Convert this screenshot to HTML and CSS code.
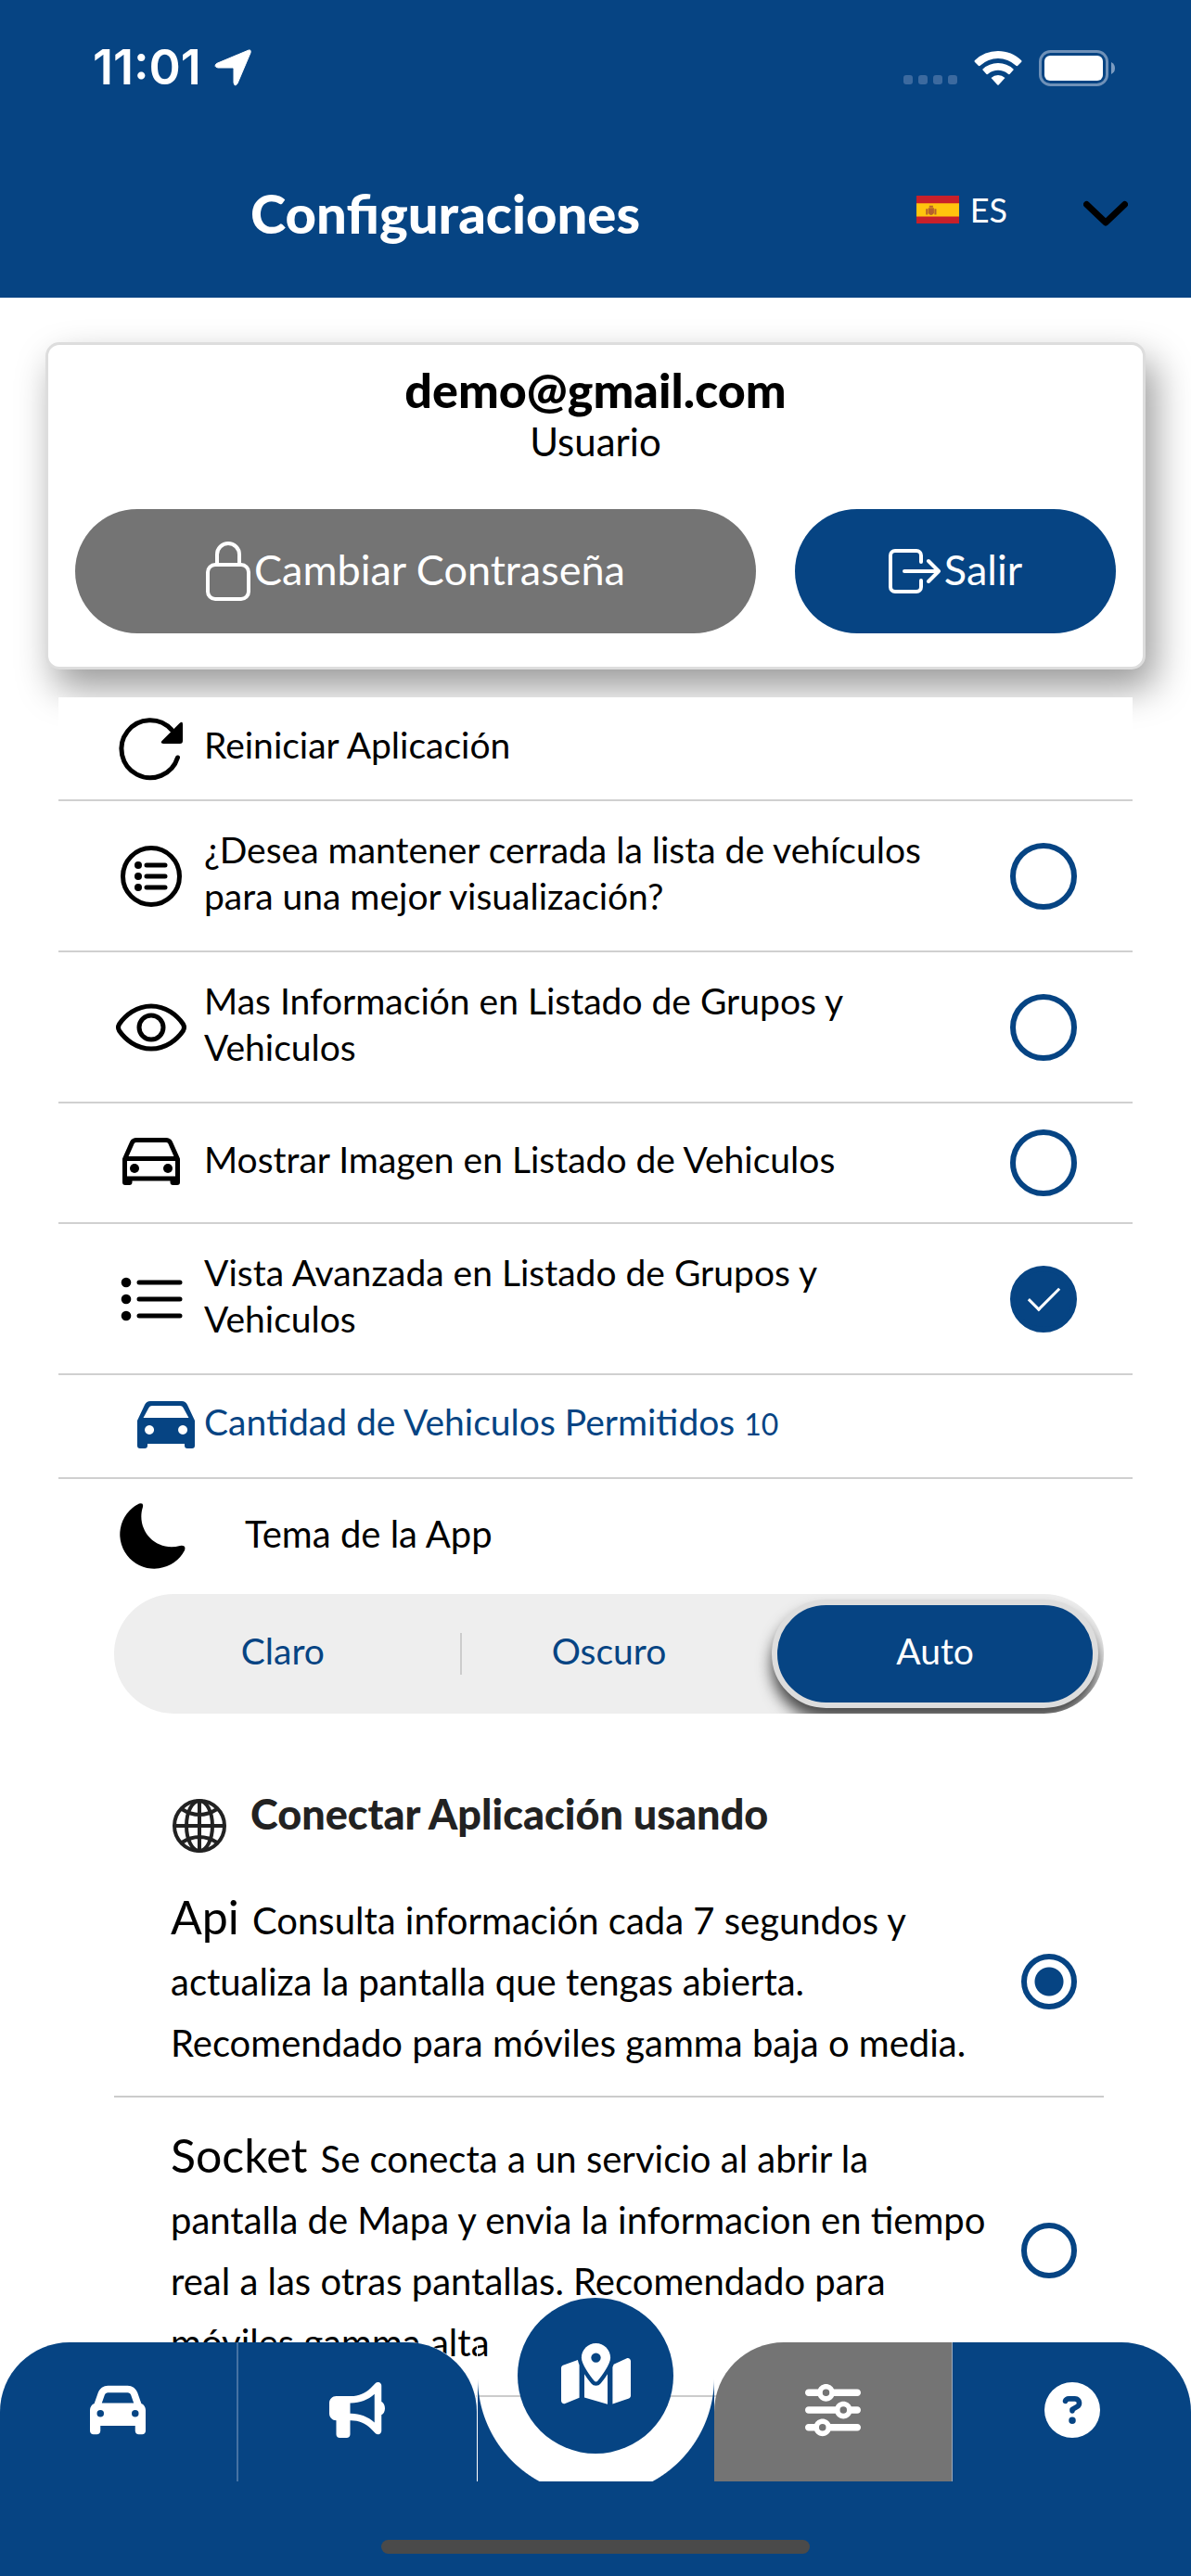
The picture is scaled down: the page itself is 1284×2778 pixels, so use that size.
FILE: index.html
```html
<!DOCTYPE html>
<html lang="es">
<head>
<meta charset="UTF-8" />
<meta name="viewport" content="width=device-width, initial-scale=1" />
<title>Configuraciones</title>
<link rel="stylesheet" href="styles.css">
</head>
<body>
  <header class="header">
    <div class="status-bar">
      <div class="status-left">
        <span class="time">11:01</span>
        <svg class="icon-location" viewBox="0 0 40 40"><path d="M36 1.500Q40 -.5 39 4L25 37Q22 41.500 21 36V21.500Q21 20 19.500 20H4Q-1 19 2.500 15.500Z" fill="#fff" stroke="#fff" stroke-width="1"/></svg>
      </div>
      <div class="status-right">
        <span class="signal"><i></i><i></i><i></i><i></i></span>
        <svg class="icon-wifi" viewBox="0 0 52 38" fill="#fff"><path d="M26 1C35.500 1 44.500 4.500 51 11Q52 12 51 13L47 17Q46 17.500 45 16.500A28 28 0 0 0 7 16.500Q6 17.500 5 17L1 13Q0 12 1 11A36 36 0 0 1 26 1Z"/><path d="M26 14A24 24 0 0 1 42.500 20.500Q43 21 42.500 21.500L38.500 26Q37.500 26.500 36.500 25.500A17 17 0 0 0 15.500 25.500Q14.500 26.500 13.500 26L9.500 21.500Q9 21 9.500 20.500A24 24 0 0 1 26 14Z"/><path d="M26 27A12 12 0 0 1 33.500 30L26.700 37.500Q26 38 25.300 37.500L18.500 30A12 12 0 0 1 26 27Z"/></svg>
        <svg class="icon-battery" viewBox="0 0 83 39"><rect x="1.500" y="1.500" width="72" height="36" rx="11" fill="none" stroke="#6f91b8" stroke-width="3"/><rect x="6" y="6" width="63" height="27" rx="6" fill="#fff"/><path d="M78 13Q82 15 82 19.500Q82 24 78 26Z" fill="#7c9cc1"/></svg>
      </div>
    </div>
    <div class="title-bar">
      <h1>Configuraciones</h1>
      <button class="lang-btn" type="button" aria-label="Idioma">
        <span class="lang">
          <svg class="flag" viewBox="0 0 45 30"><path fill="#c8202a" d="M0 0h45v30H0z"/><path fill="#ffc40d" d="M0 8h45v14H0z"/><path fill="#b5602c" d="M10 14h2v6h-2zM19 14h2v6h-2zM13.500 10.500h4v2h-4zM12.500 13h6v5.500q-3 4-6 0z"/></svg>
          ES
        </span>
        <svg class="chevron" viewBox="0 0 48 29"><path d="M3.500 4.500L24 24L44.500 4.500" fill="none" stroke="#000" stroke-width="7" stroke-linecap="round" stroke-linejoin="round"/></svg>
      </button>
    </div>
  </header>

  <main>
    <section class="card">
      <h2 class="email">demo@gmail.com</h2>
      <p class="role">Usuario</p>
      <div class="card-buttons">
        <button class="btn btn-gray" type="button">
          <svg class="icon-lock" viewBox="0 0 48 64" fill="none" stroke="#fff" stroke-width="4" stroke-linejoin="round"><rect x="2" y="25" width="44" height="37" rx="8"/><path d="M12 25V14a12 12 0 0 1 24 0v11"/></svg>
          <span>Cambiar Contraseña</span>
        </button>
        <button class="btn btn-blue" type="button">
          <svg class="icon-exit" viewBox="0 0 56 48" fill="none" stroke="#fff" stroke-width="4" stroke-linecap="round" stroke-linejoin="round"><path d="M35 14V7a5 5 0 0 0-5-5H7a5 5 0 0 0-5 5v34a5 5 0 0 0 5 5h23a5 5 0 0 0 5-5v-7M17 24h37M43 13l11 11l-11 11"/></svg>
          <span>Salir</span>
        </button>
      </div>
    </section>

    <ul class="list">
      <li class="row short">
        <svg class="icon" viewBox="0 0 80 80"><path d="M68.500 50A31 31 0 1 1 62 20" fill="none" stroke="#000" stroke-width="5" stroke-linecap="round"/><path d="M70.500 13Q74 10 74 14V32Q74 35 71 35H53Q49 34.500 52 31.500Z"/></svg>
        <a href="#" class="row-text">Reiniciar Aplicación</a>
      </li>
      <li class="row">
        <svg class="icon" viewBox="0 0 80 80"><circle cx="40" cy="40" r="30.500" fill="none" stroke="#000" stroke-width="5"/><path d="M35 28h20M35 40h20M35 52h20" stroke="#000" stroke-width="5" stroke-linecap="round"/><circle cx="26" cy="28" r="4"/><circle cx="26" cy="40" r="4"/><circle cx="26" cy="52" r="4"/></svg>
        <label class="row-text" for="closed">¿Desea mantener cerrada la lista de vehículos para una mejor visualización?</label>
        <input class="check" type="checkbox" id="closed">
      </li>
      <li class="row">
        <svg class="icon" viewBox="0 0 80 80" fill="none" stroke="#000" stroke-width="5"><path d="M40 17C24 17 12 27 5.500 36.500Q3.500 40 5.500 43.500C12 53 24 63 40 63S68 53 74.500 43.500Q76.500 40 74.500 36.500C68 27 56 17 40 17Z"/><circle cx="40" cy="40" r="13"/></svg>
        <label class="row-text" for="info">Mas Información en Listado de Grupos y Vehiculos</label>
        <input class="check" type="checkbox" id="info">
      </li>
      <li class="row medium">
        <svg class="icon" viewBox="0 0 80 80"><path d="M11.500 36L19.500 18Q21 15.500 24 15.500H56Q59 15.500 60.500 18L68.500 36V57H11.500ZM11.500 35.500H68.500" fill="none" stroke="#000" stroke-width="5" stroke-linejoin="round"/><path d="M9 57h10.500v4q0 3-3 3h-4.500q-3 0-3-3zM60.500 57h10.500v4q0 3-3 3h-4.500q-3 0-3-3z"/><circle cx="22" cy="46" r="5"/><circle cx="58" cy="46" r="5"/></svg>
        <label class="row-text" for="image">Mostrar Imagen en Listado de Vehiculos</label>
        <input class="check" type="checkbox" id="image">
      </li>
      <li class="row">
        <svg class="icon" viewBox="0 0 80 80"><path d="M27 22h44M27 40h44M27 58h44" stroke="#000" stroke-width="5" stroke-linecap="round"/><circle cx="13" cy="22" r="5.300"/><circle cx="13" cy="40" r="5.300"/><circle cx="13" cy="58" r="5.300"/></svg>
        <label class="row-text" for="advanced">Vista Avanzada en Listado de Grupos y Vehiculos</label>
        <input class="check" type="checkbox" id="advanced" checked>
      </li>
      <li class="row short allowed">
        <svg class="icon" viewBox="0 0 80 80"><path fill="#064483" fill-rule="evenodd" d="M9 34L17 17Q19 13 23 13H57Q61 13 63 17L71 34V61Q71 64 68 64H63Q60 64 60 61V59H20V61Q20 64 17 64H12Q9 64 9 61ZM15.500 31H64.500L58.500 20Q57.500 18 55 18H25Q22.500 18 21.500 20ZM22 39a5 5 0 1 0 .1 0ZM58 39a5 5 0 1 0 .1 0Z"/></svg>
        <span class="row-text">Cantidad de Vehiculos Permitidos <small>10</small></span>
      </li>
    </ul>

    <section class="theme">
      <div class="theme-title">
        <svg class="icon" viewBox="0 0 80 80"><path d="M27 4.500Q32 3 31 8C23 33 45 57 71 50Q78 49 76 55A37 37 0 1 1 27 4.500Z"/></svg>
        <span>Tema de la App</span>
      </div>
      <div class="segment">
        <button type="button">Claro</button>
        <button type="button">Oscuro</button>
        <button type="button" class="active">Auto</button>
      </div>
    </section>

    <section class="connect">
      <h2 class="connect-title">
        <svg class="icon-globe" viewBox="0 0 60 60" fill="none" stroke="#222" stroke-width="4"><circle cx="30" cy="30" r="27"/><ellipse cx="30" cy="30" rx="14" ry="27"/><path d="M30 3V57M3 30H57M11 12Q30 24 49 12M11 48Q30 36 49 48"/></svg>
        <span>Conectar Aplicación usando</span>
      </h2>
      <div class="option">
        <label for="api"><b>Api</b> Consulta información cada 7 segundos y actualiza la pantalla que tengas abierta. Recomendado para móviles gamma baja o media.</label>
        <input class="radio" type="radio" name="mode" id="api" checked>
      </div>
      <div class="option">
        <label for="socket"><b>Socket</b> Se conecta a un servicio al abrir la pantalla de Mapa y envia la informacion en tiempo real a las otras pantallas. Recomendado para móviles gamma alta</label>
        <input class="radio" type="radio" name="mode" id="socket">
      </div>
    </section>
  </main>

  <nav class="tabs">
    <div class="tab-row">
      <a href="#" class="tab tab-first" aria-label="Vehiculos"><svg viewBox="0 0 512 512"><path d="M135.200 117.400L109.100 192H402.900l-26.100-74.600C372.300 104.600 360.200 96 346.600 96H165.400c-13.600 0-25.700 8.600-30.200 21.400zM39.600 196.800L74.800 96.300C88.300 57.800 124.600 32 165.400 32H346.600c40.800 0 77.100 25.800 90.600 64.300l35.200 100.500c23.200 9.600 39.600 32.500 39.600 59.200V448c0 17.700-14.300 32-32 32H448c-17.700 0-32-14.300-32-32V400H96v48c0 17.700-14.300 32-32 32H32c-17.700 0-32-14.300-32-32V256c0-26.700 16.400-49.600 39.600-59.200zM128 288a32 32 0 1 0-64 0 32 32 0 1 0 64 0zm288 32a32 32 0 1 0 0-64 32 32 0 1 0 0 64z"/></svg></a>
      <a href="#" class="tab tab-alerts" aria-label="Alertas"><svg viewBox="0 0 512 512"><path d="M480 32c0-12.900-7.800-24.600-19.800-29.600s-25.700-2.200-34.900 6.900L381.700 53c-48 48-113.100 75-181 75H64c-35.300 0-64 28.700-64 64v96c0 35.300 28.700 64 64 64v128c0 17.700 14.300 32 32 32h64c17.700 0 32-14.300 32-32V352h8.700c67.900 0 133 27 181 75l43.600 43.600c9.200 9.200 22.900 11.900 34.900 6.900s19.800-16.600 19.800-29.600V300.400c18.600-8.800 32-32.500 32-60.400s-13.400-51.600-32-60.400V32zm-64 76.700V371.300C357.200 317.800 280.500 288 200.700 288H192V192h8.700c79.800 0 156.500-29.800 215.300-83.300z"/></svg></a>
      <div class="tab-center">
        <a href="#" class="map-btn" aria-label="Mapa"><svg viewBox="0 0 576 512"><path d="M408 120c0 54.600-73.100 151.900-105.200 192c-7.700 9.600-22 9.600-29.600 0C241.100 271.900 168 174.600 168 120C168 53.700 221.700 0 288 0s120 53.700 120 120zM288 160a40 40 0 1 0 0-80 40 40 0 1 0 0 80zM137.600 138.300c2.400 14.100 7.200 28.300 12.800 41.500V451.800L32.900 498.800C17.100 505.100 0 493.500 0 476.600V205.200c0-9.800 6-18.600 15.100-22.300zM327.800 332c13.900-17.400 35.700-45.700 56.200-77V504.300L192 449.400V255c20.500 31.300 42.300 59.600 56.200 77c20.500 25.600 59.100 25.600 79.600 0zM425.600 503.200V198.600c3.500-8.100 6.800-16.300 9.700-24.500L543.100 125.200C558.900 118.900 576 130.500 576 147.400V434.800c0 9.800-6 18.600-15.100 22.300z"/></svg></a>
      </div>
      <a href="#" class="tab tab-active" aria-label="Configuraciones"><svg viewBox="0 0 512 512"><path d="M0 416c0 17.700 14.300 32 32 32h54.700c12.300 28.300 40.500 48 73.300 48s61-19.700 73.300-48H480c17.700 0 32-14.300 32-32s-14.300-32-32-32H233.300c-12.300-28.300-40.500-48-73.300-48s-61 19.700-73.300 48H32c-17.700 0-32 14.300-32 32zm128 0a32 32 0 1 1 64 0 32 32 0 1 1-64 0zM320 256a32 32 0 1 1 64 0 32 32 0 1 1-64 0zm32-80c-32.800 0-61 19.700-73.300 48H32c-17.700 0-32 14.300-32 32s14.300 32 32 32h246.700c12.300 28.300 40.500 48 73.300 48s61-19.700 73.300-48H480c17.700 0 32-14.300 32-32s-14.300-32-32-32h-54.700c-12.300-28.300-40.500-48-73.300-48zM192 128a32 32 0 1 1 0-64 32 32 0 1 1 0 64zm73.300-64C253 35.700 224.800 16 192 16s-61 19.700-73.300 48H32C14.300 64 0 78.300 0 96s14.300 32 32 32h86.700c12.300 28.300 40.500 48 73.300 48s61-19.700 73.300-48H480c17.700 0 32-14.300 32-32s-14.300-32-32-32H265.300z"/></svg></a>
      <a href="#" class="tab tab-last" aria-label="Ayuda"><svg viewBox="0 0 512 512"><path d="M256 512A256 256 0 1 0 256 0a256 256 0 1 0 0 512zM169.800 165.300c7.900-22.300 29.100-37.300 52.800-37.300h58.300c34.900 0 63.100 28.300 63.100 63.100c0 22.600-12.100 43.500-31.700 54.800L280 264.400c-.2 13-10.900 23.600-24 23.600c-13.300 0-24-10.700-24-24V250.500c0-8.600 4.600-16.500 12.100-20.800l44.300-25.400c4.700-2.700 7.600-7.700 7.600-13.100c0-8.400-6.800-15.100-15.100-15.100H222.600c-3.400 0-6.400 2.100-7.500 5.300l-.4 1.200c-4.400 12.500-18.200 19-30.600 14.600s-19-18.200-14.600-30.600l.3-1.300zM224 352a32 32 0 1 1 64 0 32 32 0 1 1-64 0z"/></svg></a>
    </div>
    <div class="home-area"><div class="home-bar"></div></div>
  </nav>
</body>
</html>
```

FILE: styles.css
```css
* {
  box-sizing: border-box;
}
body {
  margin: 0;
  height: 100vh;
  overflow: hidden;
  background: #fff;
  color: #000;
  font-family: Lato, "Open Sans", sans-serif;
  font-size: 40px;
  line-height: 50px;
}
h1, h2, p, ul {
  margin: 0;
  padding: 0;
}
svg {
  display: block;
  flex: none;
}
button {
  border: none;
  background: none;
  padding: 0;
  font: inherit;
  cursor: pointer;
}
a {
  color: inherit;
  text-decoration: none;
}

/* header */
.header {
  background: #064483;
  color: #fff;
  height: 321px;
}
.status-bar {
  display: flex;
  justify-content: space-between;
  padding: 48px 81px 0 100px;
}
.status-left, .status-right {
  display: flex;
  align-items: center;
  height: 50px;
}
.status-left {
  gap: 14px;
}
.time {
  font-family: Inter, sans-serif;
  font-size: 52px;
  font-weight: 600;
}
.icon-location {
  width: 40px;
}
.signal {
  display: flex;
  gap: 6px;
  margin: 26px 18px 0 0;
}
.signal i {
  width: 10px;
  height: 10px;
  border-radius: 3px;
  background: #3c6a9f;
}
.icon-wifi {
  width: 52px;
  margin-right: 18px;
}
.icon-battery {
  width: 83px;
}
.title-bar {
  display: flex;
  align-items: center;
  justify-content: space-between;
  height: 264px;
  padding: 0 68px 0 270px;
}
h1 {
  font-size: 58px;
  font-weight: 900;
}
.lang-btn, .lang {
  display: flex;
  align-items: center;
  color: #fff;
}
.lang {
  gap: 12px;
  padding-bottom: 8px;
  font-size: 36px;
}
.flag {
  width: 46px;
}
.chevron {
  width: 48px;
  margin-left: 82px;
}

/* user card */
.card {
  margin: 48px 49px 0;
  padding: 20px 29px 36px;
  border: 3px solid #ddd;
  border-radius: 15px;
  background: #fff;
  box-shadow: 10px 20px 40px rgba(0,0,0,0.4);
  text-align: center;
}
.email {
  font-size: 52px;
  font-weight: 900;
  line-height: 56px;
}
.role {
  font-size: 42px;
  line-height: 56px;
}
.card-buttons {
  display: grid;
  grid-template-columns: 734fr 346fr;
  gap: 42px;
  margin-top: 45px;
}
.btn {
  display: flex;
  align-items: center;
  justify-content: center;
  gap: 4px;
  height: 134px;
  border-radius: 67px;
  color: #fff;
  font-size: 45px;
}
.btn span {
  padding-bottom: 4px;
}
.btn-gray {
  background: #747474;
}
.btn-blue {
  background: #064483;
}
.icon-lock {
  width: 48px;
}
.icon-exit {
  width: 56px;
}

/* settings list */
.list {
  position: relative;
  margin: 30px 63px 0;
  list-style: none;
  background: #fff;
}
.row {
  display: flex;
  align-items: center;
  height: 163px;
  padding: 0 60px;
  border-bottom: 2px solid #d0d0d0;
  font-size: 39px;
}
.row.short {
  height: 112px;
}
.row.medium {
  height: 130px;
}
.icon {
  width: 80px;
  height: 80px;
}
.row-text {
  flex: 1;
  max-width: 860px;
  margin-left: 17px;
  padding: 0 40px 8px 0;
}
.check, .radio {
  appearance: none;
  flex: none;
  margin: 0 0 0 auto;
  border: 6px solid #064483;
  border-radius: 50%;
  background: #fff;
}
.check {
  display: grid;
  place-items: center;
  width: 72px;
  height: 72px;
}
.check:checked {
  background: #064483;
}
.check:checked::before {
  content: "";
  width: 14px;
  height: 30px;
  border: solid #fff;
  border-width: 0 3px 3px 0;
  rotate: 45deg;
  margin-top: -8px;
}
.allowed {
  padding-left: 76px;
  color: #064483;
}
.allowed .row-text {
  margin-left: 1px;
}
.allowed small {
  font-size: 32px;
}

/* theme */
.theme {
  padding: 22px 94px 0 123px;
}
.theme-title {
  display: flex;
  align-items: center;
  gap: 61px;
  height: 80px;
}
.theme-title span {
  padding-bottom: 6px;
}
.segment {
  display: grid;
  grid-template-columns: 1fr 1fr 1fr;
  height: 129px;
  margin-top: 22px;
  padding: 6px;
  border-radius: 65px;
  background: #eee;
  overflow: hidden;
}
.segment button {
  position: relative;
  padding-bottom: 8px;
  color: #064483;
  font-size: 39px;
}
.segment button:first-child::after {
  content: "";
  position: absolute;
  right: -17px;
  top: 36px;
  width: 2px;
  height: 45px;
  background: #ccc;
}
.segment .active {
  background: #064483;
  color: #fff;
  border: 6px solid #ddd;
  border-radius: 60px;
  box-shadow: 0 12px 16px rgba(0,0,0,0.7);
}

/* connection */
.connect {
  padding: 75px 94px 0 123px;
}
.connect-title {
  display: flex;
  align-items: flex-start;
  gap: 25px;
  margin-bottom: 6px;
  padding-left: 62px;
  color: #222;
  font-size: 45px;
  font-weight: 900;
  line-height: 66px;
}
.icon-globe {
  width: 60px;
  margin-top: 16px;
}
.option {
  display: flex;
  align-items: center;
  padding: 33px 29px 24px 61px;
  border-bottom: 2px solid #ccc;
  line-height: 66px;
}
.option label {
  width: 880px;
}
.option b {
  margin-right: 4px;
  font-size: 50px;
  font-weight: 400;
  line-height: 50px;
}
.radio {
  width: 60px;
  height: 60px;
}
.radio:checked {
  background: radial-gradient(circle, #064483 15px, #fff 16px);
}

/* bottom tabs */
.tabs {
  position: fixed;
  left: 0;
  right: 0;
  bottom: 0;
}
.tab-row {
  display: grid;
  grid-template-columns: repeat(5, 1fr);
  height: 150px;
}
.tab {
  display: flex;
  align-items: center;
  justify-content: center;
  background: #064483;
}
.tab svg {
  width: 60px;
  margin-top: -4px;
  fill: #fff;
}
.tab-first {
  border-radius: 75px 0 0 0;
  border-right: 2px solid #4572a3;
}
.tab-alerts {
  border-radius: 0 75px 0 0;
  box-shadow: 1px 0 0 #fff;
}
.tab-active {
  border-radius: 75px 0 0 0;
  background: #747474;
  border-right: 1px solid #9aabbd;
}
.tab-last {
  border-radius: 0 75px 0 0;
}
.tab-center {
  background: radial-gradient(circle at 50% 0, transparent 127px, #064483 128px) bottom / 100% 112px no-repeat;
  border-left: 1px solid #fff;
}
.map-btn {
  display: flex;
  align-items: center;
  justify-content: center;
  width: 168px;
  height: 168px;
  margin: -48px auto 0;
  border-radius: 50%;
  background: #064483;
}
.map-btn svg {
  width: 75px;
  margin-top: -4px;
  fill: #fff;
}
.home-area {
  height: 102px;
  padding-top: 63px;
  background: #064483;
}
.home-bar {
  width: 36%;
  height: 15px;
  margin: 0 auto;
  border-radius: 8px;
  background: #4a4a4a;
}
```
